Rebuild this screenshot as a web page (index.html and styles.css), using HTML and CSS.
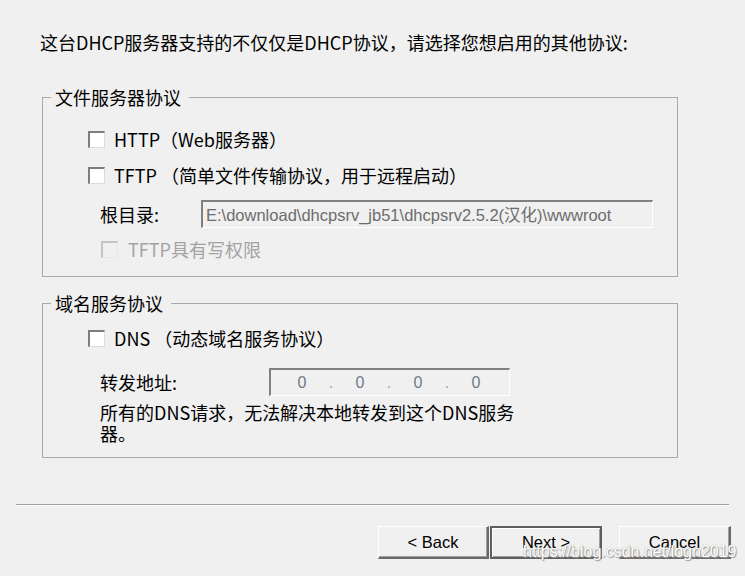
FILE: index.html
```html
<!DOCTYPE html>
<html lang="zh-CN">
<head>
<meta charset="utf-8">
<title>DHCP</title>
<link rel="stylesheet" href="styles.css">
</head>
<body>
<div class="dialog">
  <div class="intro">这台DHCP服务器支持的不仅仅是DHCP协议，请选择您想启用的其他协议:</div>

  <fieldset class="group group-file">
    <legend>文件服务器协议</legend>
    <div class="row cbrow">
      <span class="box"></span><span>HTTP（Web服务器）</span>
    </div>
    <div class="row cbrow tftp">
      <span class="box"></span><span>TFTP （简单文件传输协议，用于远程启动）</span>
    </div>
    <div class="row field root">
      <span class="label label-root">根目录:</span>
      <span class="input">E:\download\dhcpsrv_jb51\dhcpsrv2.5.2(汉化)\wwwroot</span>
    </div>
    <div class="row cbrow disabled">
      <span class="box"></span><span>TFTP具有写权限</span>
    </div>
  </fieldset>

  <fieldset class="group group-dns">
    <legend>域名服务协议</legend>
    <div class="row cbrow">
      <span class="box"></span><span>DNS （动态域名服务协议）</span>
    </div>
    <div class="row field fwd">
      <span class="label label-fwd">转发地址:</span>
      <span class="ip">
        <span class="oct">0</span><span class="dot">.</span>
        <span class="oct">0</span><span class="dot">.</span>
        <span class="oct">0</span><span class="dot">.</span>
        <span class="oct">0</span>
      </span>
    </div>
    <p class="note">所有的DNS请求，无法解决本地转发到这个DNS服务器。</p>
  </fieldset>

  <div class="sep"></div>

  <div class="buttons">
    <button class="btn">&lt; Back</button>
    <button class="btn default">Next &gt;</button>
    <button class="btn cancel">Cancel</button>
  </div>

  <div class="watermark">https://blog.csdn.net/logn2019</div>
</div>
</body>
</html>
```

FILE: styles.css
```css
html, body {
  margin: 0;
  padding: 0;
  background: #f0f0f0;
}

.dialog {
  position: relative;
  width: 745px;
  height: 576px;
  overflow: hidden;
  padding-top: 32px;
  box-sizing: border-box;
  font-family: "Noto Sans CJK SC", "Noto Sans", sans-serif;
  font-size: 18px;
  color: #000;
}

.intro {
  margin-left: 40px;
  line-height: 20px;
  height: 20px;
  white-space: nowrap;
}

.group {
  box-sizing: border-box;
  width: 636px;
  margin: 35px 0 0 42px;
  padding: 20px 0 15px 0;
  border: 1px solid #a9a9a9;
  min-inline-size: 0;
}

.group legend {
  margin-left: 8px;
  padding: 0 8px 0 4px;
  line-height: 20px;
  font-size: 18px;
}

.group-dns {
  margin-top: 16px;
  padding: 13px 0 13px 0;
}

.row {
  display: flex;
  align-items: center;
  white-space: nowrap;
}

.cbrow {
  height: 24px;
  padding-left: 45px;
  line-height: 20px;
}

.box {
  box-sizing: border-box;
  width: 17px;
  height: 17px;
  margin-right: 9px;
  background: #fff;
  border-style: solid;
  border-width: 2px 1px 1px 2px;
  border-color: #7d7d7d #dcdcdc #dcdcdc #7d7d7d;
  flex: none;
}

.tftp {
  margin-top: 12px;
}

.disabled {
  margin-top: 9px;
  padding-left: 58px;
  color: #a3a3a3;
}

.disabled .box {
  background: #f0f0f0;
  border-color: #c4c4c4 #e8e8e8 #e8e8e8 #c4c4c4;
  margin-right: 10px;
}

.field {
  height: 28px;
  padding-left: 57px;
  line-height: 20px;
}

.root {
  margin-top: 13px;
}

.label-root {
  width: 101px;
  flex: none;
}

.input {
  box-sizing: border-box;
  width: 452px;
  height: 28px;
  padding: 0 0 0 3px;
  display: flex;
  align-items: center;
  font-family: "Liberation Sans", "Noto Sans CJK SC", sans-serif;
  font-size: 16.5px;
  color: #6d6d6d;
  background: #f0f0f0;
  border-style: solid;
  border-width: 2px 1px 1px 2px;
  border-color: #808080 #ffffff #ffffff #808080;
  overflow: hidden;
}

.fwd {
  margin-top: 18px;
}

.label-fwd {
  width: 169px;
  flex: none;
}

.ip {
  box-sizing: border-box;
  width: 241px;
  height: 28px;
  padding-left: 6px;
  display: flex;
  align-items: center;
  background: #f0f0f0;
  border-style: solid;
  border-width: 2px 1px 1px 2px;
  border-color: #808080 #ffffff #ffffff #808080;
  font-family: "Liberation Sans", Arial, sans-serif;
  font-size: 16px;
}

.oct {
  width: 50px;
  text-align: center;
  color: #6f7a86;
}

.dot {
  width: 8px;
  text-align: center;
  color: #a0a0a0;
}

.note {
  margin: 6px 0 0 0;
  padding-left: 57px;
  width: 416px;
  line-height: 21px;
}

.sep {
  width: 713px;
  margin: 46px 0 0 16px;
  border-top: 1px solid #a0a0a0;
  border-bottom: 1px solid #ffffff;
}

.buttons {
  display: flex;
  justify-content: flex-end;
  padding-right: 14px;
  margin-top: 20px;
  gap: 1px;
}

.btn {
  box-sizing: border-box;
  width: 111px;
  height: 33px;
  margin: 0;
  padding: 0;
  font-family: "Liberation Sans", Arial, sans-serif;
  font-size: 16.5px;
  color: #000;
  background: #f0f0f0;
  border-style: solid;
  border-width: 1px 2px 2px 1px;
  border-color: #ffffff #6a6a6a #6a6a6a #ffffff;
  box-shadow: inset -1px -1px 0 #a0a0a0;
}

.btn.default {
  width: 112px;
  border-width: 2px;
  border-color: #5e5e5e;
  box-shadow: inset 1px 1px 0 #ffffff, inset -1px -1px 0 #a0a0a0;
}

.btn.cancel {
  width: 112px;
  margin-left: 16px;
}

.watermark {
  position: absolute;
  left: 523px;
  top: 543px;
  font-family: "Liberation Sans", Arial, sans-serif;
  font-size: 16px;
  line-height: 18px;
  color: #ffffff;
  text-shadow: 0 0 1px #8a8a8a, 1px 1px 1px #9a9a9a;
  white-space: nowrap;
}
```
